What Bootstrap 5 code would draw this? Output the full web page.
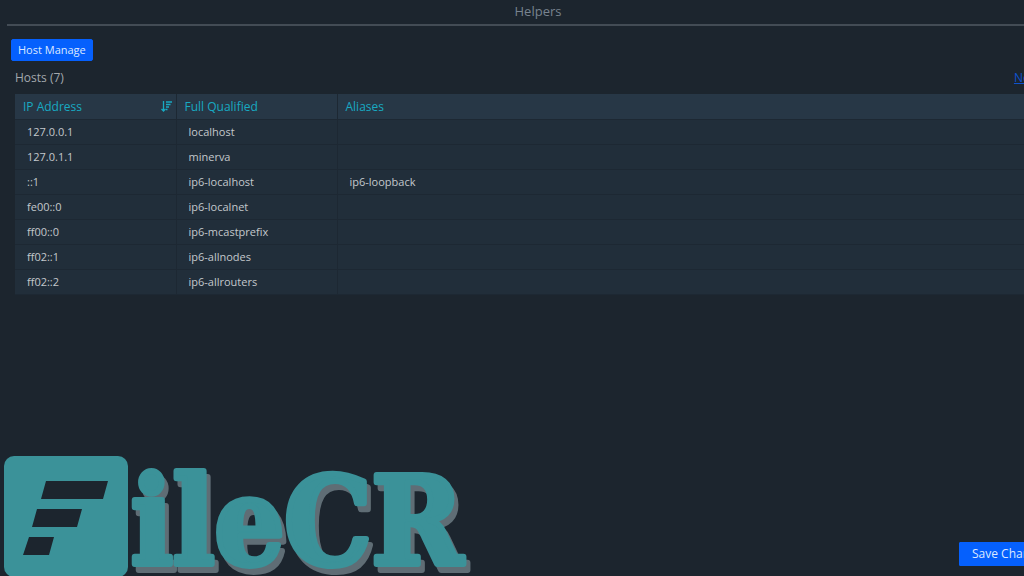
<!DOCTYPE html>
<html lang="en">
<head>
<meta charset="utf-8">
<meta name="viewport" content="width=device-width, initial-scale=1">
<title>Helpers</title>
<link href="https://cdn.jsdelivr.net/npm/bootstrap@5.3.0/dist/css/bootstrap.min.css" rel="stylesheet">
<style>
  body { background: #1c252e; color: #a3a8ad; font-family: "Open Sans", "Noto Sans", sans-serif; font-size: 12px; line-height: 16px; }
  .workspace { margin-left: 7px; margin-right: -45px; }
  .page-title { font-size: 13px; line-height: 22px; font-weight: 500; color: #78838f; border-bottom: 2px solid #434c55; padding-bottom: 2px; }
  .btn-app { --bs-btn-bg: #0560fd; --bs-btn-border-color: #0560fd; --bs-btn-color: #dce8ff; --bs-btn-font-weight: 500; --bs-btn-border-radius: 2px; --bs-btn-font-size: 11px; --bs-btn-padding-x: 6px; --bs-btn-padding-y: 2px; --bs-btn-line-height: 16px; }
  .btn-save { --bs-btn-font-size: 12px; --bs-btn-padding-x: 12px; --bs-btn-padding-y: 3px; --bs-btn-border-radius: 1px; }
  .tool-bar { padding: 13px 4px 0; }
  .save-bar { padding: 0 7px 10px; }
  .host-bar { padding: 9px 30px 8px 8px; }
  .new-link { color: #0e52cf; }
  .host-table { table-layout: fixed; margin-left: 8px; --bs-table-bg: #212e3a; --bs-table-border-color: #1d2833; }
  .host-table > thead { --bs-table-bg: #273746; }
  .host-table th { color: #18a9c2; font-weight: 500; padding: 4px 4px 4px 8px; }
  .host-table td { color: #c3c8cc; font-size: 11px; font-weight: 500; padding: 4px 4px 4px 12px; }
  .host-table th, .host-table td { border-width: 0 1px 1px 0; }
  .host-table tr { height: 25px; }
  .col-fixed { width: 161px; }
  .watermark text { font-family: "DejaVu Serif Condensed", "DejaVu Serif", serif; font-weight: 700; font-size: 122px; stroke-width: 6; stroke-linejoin: round; filter: drop-shadow(4px 6px 0 #5f6d75); }
</style>
</head>
<body class="overflow-hidden">
<div class="position-relative min-vh-100 overflow-hidden d-flex flex-column">
  <main class="workspace flex-grow-1 d-flex flex-column">
    <h1 class="page-title text-center mb-0">Helpers</h1>
    <div class="tool-bar"><button type="button" class="btn btn-app">Host Manage</button></div>
    <div class="host-bar d-flex justify-content-between"><span>Hosts (7)</span><a class="new-link" href="#new">New</a></div>
    <table class="table host-table mb-0">
      <colgroup><col class="col-fixed"><col class="col-fixed"><col></colgroup>
      <thead><tr>
        <th scope="col"><div class="d-flex justify-content-between align-items-center"><span>IP Address</span>
          <svg width="11" height="11" viewBox="0 0 11 11" fill="none" stroke="currentColor" stroke-width="1.300" aria-hidden="true"><path d="M2.500 0v10M.5 8l2 2 2-2M5 1h6M5 3.500h4.500M5 6h3M5 8.500h1.500"/></svg></div></th>
        <th scope="col">Full Qualified</th><th scope="col">Aliases</th></tr></thead>
      <tbody>
        <tr><td>127.0.0.1</td><td>localhost</td><td></td></tr>
        <tr><td>127.0.1.1</td><td>minerva</td><td></td></tr>
        <tr><td>::1</td><td>ip6-localhost</td><td>ip6-loopback</td></tr>
        <tr><td>fe00::0</td><td>ip6-localnet</td><td></td></tr>
        <tr><td>ff00::0</td><td>ip6-mcastprefix</td><td></td></tr>
        <tr><td>ff02::1</td><td>ip6-allnodes</td><td></td></tr>
        <tr><td>ff02::2</td><td>ip6-allrouters</td><td></td></tr>
      </tbody>
    </table>
    <div class="save-bar mt-auto d-flex justify-content-end"><button type="button" class="btn btn-app btn-save">Save Changes</button></div>
  </main>
  <svg class="watermark position-absolute bottom-0 start-0 pe-none" width="480" height="126" viewBox="0 450 480 126" role="img" aria-label="FileCR">
    <rect x="4" y="456" width="124" height="121" rx="10" fill="#3b9299"/>
    <path fill="#1c252e" d="M46 481h62l-5 18H41zM37 509h45l-5 18H32zM29 537h25l-5 18H23z"/>
    <text x="131" y="564" fill="#3b9299" stroke="#3b9299">ileCR</text>
  </svg>
</div>
<script src="https://cdn.jsdelivr.net/npm/bootstrap@5.3.0/dist/js/bootstrap.bundle.min.js"></script>
</body>
</html>
